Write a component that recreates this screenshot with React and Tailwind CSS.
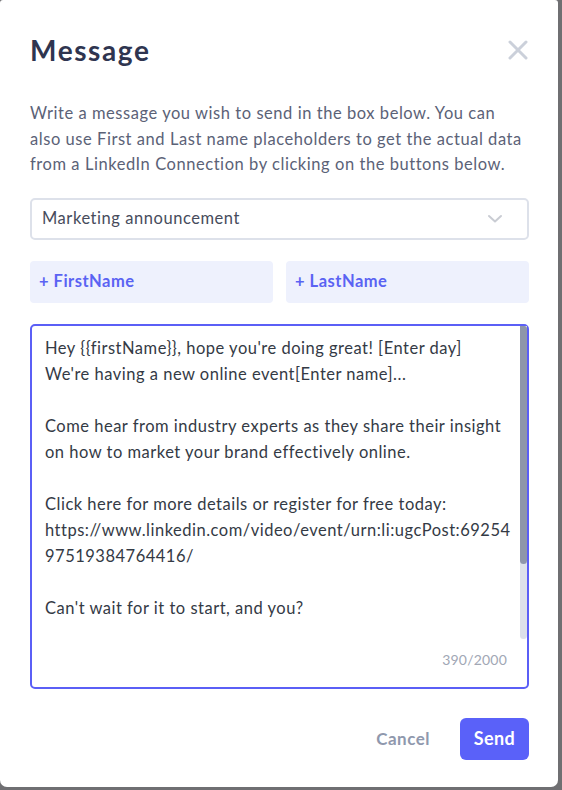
import React from "react";

const lines = [
  "Hey {{firstName}}, hope you're doing great! [Enter day]",
  "We're having a new online event[Enter name]...",
  "",
  "Come hear from industry experts as they share their insight",
  "on how to market your brand effectively online.",
  "",
  "Click here for more details or register for free today:",
  "https://www.linkedin.com/video/event/urn:li:ugcPost:69254",
  "97519384764416/",
  "",
  "Can't wait for it to start, and you?",
];

export default function App() {
  return (
    <div
      className="w-[562px] h-[790px] bg-[#6f6f72] overflow-hidden"
      style={{ fontFamily: "Lato, 'Noto Sans', sans-serif" }}
    >
      <div className="w-[558px] h-[787px] bg-white rounded-b-[7px] rounded-t-[3px] pl-[30px] pr-[29px] pt-[30px] flex flex-col">
        <div className="flex items-center justify-between h-[40px]">
          <h1 className="text-[28px] font-bold text-[#2f3550] tracking-[1.6px]">Message</h1>
          <svg width="20" height="20" viewBox="0 0 20 20" className="mr-[1px]">
            <path d="M2 2 L18 18 M18 2 L2 18" stroke="#cbd0da" strokeWidth="3" strokeLinecap="round" />
          </svg>
        </div>
        <p className="mt-[31px] text-[16.5px] leading-[25.5px] text-[#5b6277] tracking-[0.55px] whitespace-nowrap">
          Write a message you wish to send in the box below. You can
          <br />
          also use First and Last name placeholders to get the actual data
          <br />
          from a LinkedIn Connection by clicking on the buttons below.
        </p>
        <div className="mt-[20px] h-[42px] border-2 border-[#dde1ea] rounded-[5px] flex items-center justify-between pl-[10px] pr-[24px]">
          <span className="text-[16.5px] text-[#474c5c] tracking-[0.55px]">Marketing announcement</span>
          <svg width="16" height="10" viewBox="0 0 16 10">
            <path d="M2 2 L8 7.5 L14 2" stroke="#c9ccd3" strokeWidth="2" fill="none" strokeLinecap="round" strokeLinejoin="round" />
          </svg>
        </div>
        <div className="mt-[21px] grid grid-cols-2 gap-[13px]">
          <div className="h-[42px] bg-[#eef1fd] rounded-[4px] flex items-center pl-[9px] text-[16.5px] font-bold text-[#5a63f3] tracking-[0.5px]">
            + FirstName
          </div>
          <div className="h-[42px] bg-[#eef1fd] rounded-[4px] flex items-center pl-[9px] text-[16.5px] font-bold text-[#5a63f3] tracking-[0.5px]">
            + LastName
          </div>
        </div>
        <div className="mt-[21px] h-[365px] border-2 border-[#5b5ff6] rounded-[5px] flex flex-col">
          <div className="flex h-[313px]">
            <div className="flex-1 pl-[13px] pt-[9px] text-[16.5px] leading-[26px] text-[#343a45] overflow-hidden tracking-[0.5px]">
              {lines.map((l, i) => (
                <div key={i} className="whitespace-nowrap h-[26px]">
                  {l}
                </div>
              ))}
            </div>
            <div className="w-[7px] bg-[#dde1ea] rounded-b-[4px] flex flex-col">
              <div className="h-[238px] bg-[#8e96ab] rounded-b-[4px] rounded-tr-[3px]"></div>
            </div>
          </div>
          <div className="flex justify-end pr-[20px] pt-[10px] text-[14px] text-[#a1a7b5] tracking-[0.2px]">390/2000</div>
        </div>
        <div className="mt-[29px] flex items-center justify-end">
          <button className="text-[17px] font-bold text-[#8f98ad] mr-[30px] tracking-[0.5px]">Cancel</button>
          <button className="w-[69px] h-[42px] bg-[#5a61f9] rounded-[6px] text-white text-[18px] font-bold tracking-[0.4px]">
            Send
          </button>
        </div>
      </div>
    </div>
  );
}
